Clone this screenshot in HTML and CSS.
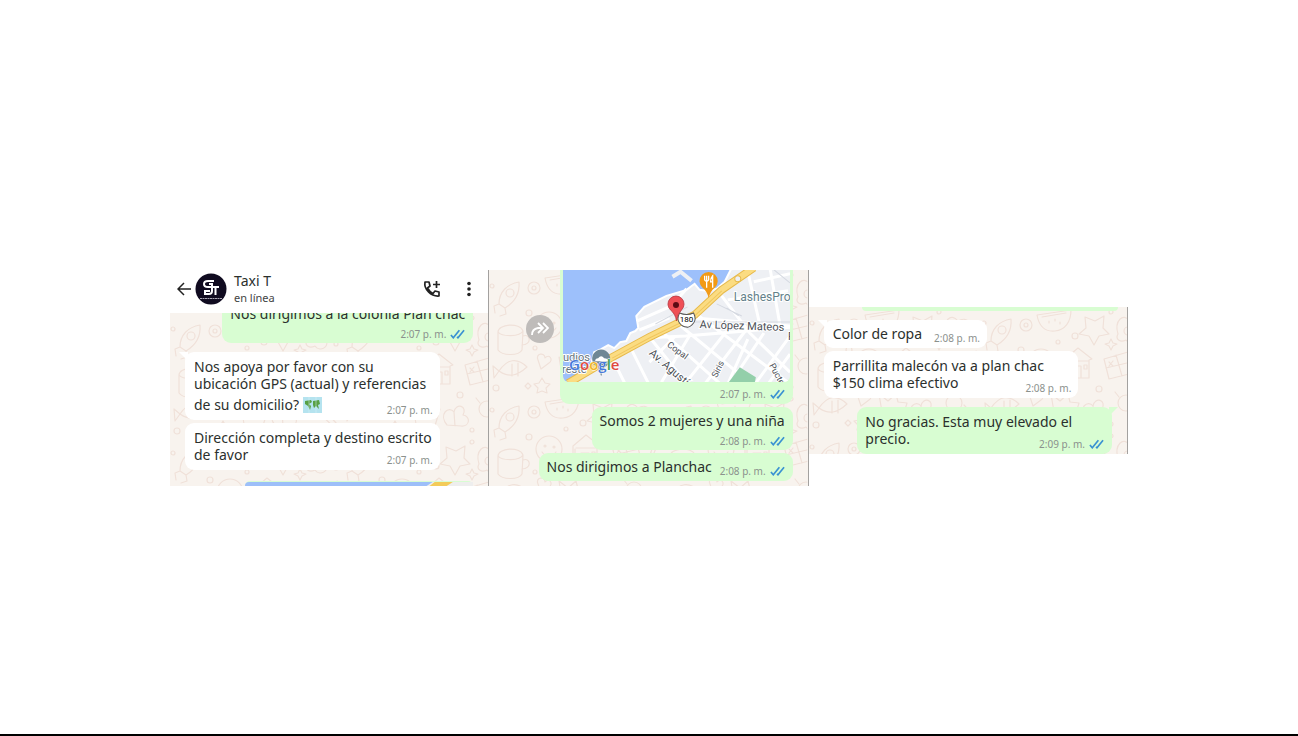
FILE: index.html
```html
<!DOCTYPE html>
<html lang="es">
<head>
    <meta charset="UTF-8">
    <title>Taxi T</title>
    <link rel="stylesheet" href="styles.css">
</head>
<body>
    <!-- shared shapes -->
    <svg class="defs" width="0" height="0" aria-hidden="true">
        <defs>
            <symbol id="ticks" viewBox="0 0 16 10">
                <path d="M1 6l2.5 3L10 1M7.5 8l1 1L15 1" fill="none" stroke="#3a92d2" stroke-width="1.8"/>
            </symbol>
            <pattern id="doodles" width="172" height="124" patternUnits="userSpaceOnUse">
                <g fill="none" stroke="#f0e1d9" stroke-width="1.2" stroke-linecap="round" stroke-linejoin="round">
                    <path d="M10 34c0-12 8-20 20-22 1 12-4 20-14 26zM10 34l-5 2 1 7M16 38l1 6-6 2"/>
                    <circle cx="21" cy="23" r="4"/>
                    <circle cx="45" cy="18" r="6"/><circle cx="45" cy="18" r="2"/>
                    <path d="M56 8l34-5c0 12-6 20-16 21S58 19 56 8zM61 10l24-4M68 14v2M74 12v2M79 15v2"/>
                    <path d="M104 10l10 4 9-5-1 12 6 6-10 2-5 9-5-9-10-2 7-6z"/>
                    <path d="M137 27c-4-13 5-22 12-13 10-6 17 5 7 13 4 8-7 12-11 6-6 3-11-1-8-6z"/>
                    <circle cx="147" cy="24" r="4"/>
                    <path d="M9 62c0-8 22-10 25-1l-1 19c-3 6-20 6-24 0zM9 62c4 5 22 5 25-1M34 66c8-3 9 9-1 9"/>
                    <circle cx="60" cy="55" r="13"/><circle cx="56" cy="52" r="1"/><circle cx="65" cy="53" r="1"/>
                    <path d="M53 58c4 6 10 6 14 0"/>
                    <path d="M84 65V52l13-11 14 11-3 1v18H86V55M92 71V59h8v12M87 54h21M103 58h3v4h-3z"/>
                    <path d="M123 52l24-7 5 21-24 6zM135 48l6 21M125 61l25-6M128 55l4 4M132 54l-4 5"/>
                    <path d="M158 69l9-25 3 3-10 24zM162 59l5 2"/>
                    <path d="M10 101c8-12 18-14 28-4-10 9-18 11-28 4zM10 101l-6-5 1 12zM23 94v12M29 93v13"/>
                    <path d="M49 90c-3-7 7-8 7-2 4-5 9 2 4 5l-8 6zM53 108l3 5 5 1-4 4 1 5-5-2-5 2 1-5-4-4 5-1z"/>
                    <path d="M74 111l-4-24 9 7 8-7 2 8 9 1-6 20zM77 102h13M76 106h15"/>
                    <path d="M105 112c-9-11 2-20 7-13 2-10 14-6 9 3 8 1 7 12-2 11zM112 99l1 14"/>
                    <circle cx="145" cy="96" r="8"/><path d="M151 102l13 12 3-3-12-13M160 111l-3 4M138 90l-4-5"/>
                    <circle cx="3" cy="16" r="2"/><circle cx="40" cy="43" r="3"/><circle cx="94" cy="29" r="3"/>
                    <circle cx="130" cy="5" r="2"/><circle cx="166" cy="31" r="2"/><circle cx="77" cy="35" r="2"/>
                    <circle cx="118" cy="82" r="3"/><circle cx="46" cy="78" r="2"/><circle cx="7" cy="118" r="3"/>
                    <circle cx="130" cy="117" r="2"/><circle cx="78" cy="77" r="2"/><circle cx="165" cy="83" r="3"/>
                    <path d="M36 116l3-3 3 3-3 3zM128 36l2-4 2 4 4 1-4 2-2 4-2-4-4-2z"/>
                </g>
            </pattern>
        </defs>
    </svg>

    <main class="wrap">
        <section class="panel">
            <header class="top">
                <button class="icon" aria-label="Atrás">
                    <svg width="14" height="14" viewBox="0 0 14 14"><path d="M14 7H1M7 1L1 7l6 6" fill="none" stroke="#222" stroke-width="1.5"/></svg>
                </button>
                <svg class="avatar" width="32" height="32" viewBox="0 0 32 32" role="img" aria-label="GT">
                    <circle cx="16" cy="16" r="15.5" fill="#100b20"/>
                    <!-- interlocked monogram -->
                    <path d="M19 8h-6q-4 0-4 3t4 3h4v-3h-3M16 14h8M20.500 14v8M17 14v4q0 3-3 3h-4v-3h5" fill="none" stroke="#fff" stroke-width="2"/>
                    <path d="M5 25.500h22" stroke="#aaa7b4" stroke-width="1" stroke-dasharray="2 .5"/>
                </svg>
                <div class="who">
                    <h1>Taxi T</h1>
                    <p>en línea</p>
                </div>
                <button class="icon call" aria-label="Llamar">
                    <svg width="18" height="18" viewBox="0 0 18 18"><path d="M2 2h4l1 4-2.500 2q2 4 5.500 5.500l2-2.500 4 1v4Q10 16.500 5.500 12T2 2zM13.500 1v7M10 4.500h7" fill="none" stroke="#222" stroke-width="1.700" stroke-linejoin="round"/></svg>
                </button>
                <button class="icon" aria-label="Más opciones">
                    <svg width="4" height="16" viewBox="0 0 4 16" fill="#222"><circle cx="2" cy="2.500" r="1.800"/><circle cx="2" cy="8" r="1.800"/><circle cx="2" cy="13.500" r="1.800"/></svg>
                </button>
            </header>
            <div class="chat">
                <svg class="paper" aria-hidden="true"><rect width="100%" height="100%" fill="url(#doodles)"/></svg>
                <div class="msg out cut">
                    <p>Nos dirigimos a la colonia Plan chac</p>
                    <div class="meta below">2:07 p. m.<svg class="ticks"><use href="#ticks"/></svg></div>
                </div>
                <div class="msg in tail wide">
                    <p>Nos apoya por favor con su<br>ubicación GPS (actual) y referencias<br>de su domicilio?
                        <svg class="emoji" width="19" height="16" viewBox="0 0 19 16" role="img" aria-label="Mapa"><path fill="#b5e3ef" d="M0 0h19v16H0z"/><path fill="#58a044" d="M2 4l6-1 1 2-3 2 2 2-1 4-2-4-3-2zM10 4l6-1 1 4-2 1 1 4-3-3-2 2-1-3z"/><path d="M6 0v16M13 0v16" stroke="#d9f1f5" stroke-width=".5"/></svg>
                    </p>
                    <div class="meta">2:07 p. m.</div>
                </div>
                <div class="msg in wide">
                    <p>Dirección completa y destino escrito<br>de favor</p>
                    <div class="meta">2:07 p. m.</div>
                </div>
                <div class="msg out peek">
                    <svg width="100%" height="4" viewBox="0 0 226 4" preserveAspectRatio="none" aria-hidden="true"><path fill="#9dbff9" d="M0 4Q0 0 4 0h222v4z"/><path fill="#eee" d="M180 4l6-4h40v4z"/><path fill="#f3cb59" d="M183 4l5-4h18l-6 4z"/></svg>
                </div>
            </div>
        </section>

        <section class="panel">
            <div class="chat">
                <svg class="paper" aria-hidden="true"><rect width="100%" height="100%" fill="url(#doodles)"/></svg>
                <button class="forward" aria-label="Reenviar">
                    <svg width="18" height="14" viewBox="0 0 18 14"><path d="M1 13Q1 7 7 6h5M7 1l5 5-5 5M12 1l5 5-5 5" fill="none" stroke="#fff" stroke-width="1.800"/></svg>
                </button>
                <div class="msg out place">
                    <svg class="map" viewBox="0 0 226 112" preserveAspectRatio="xMidYMid slice" role="img" aria-label="Mapa">
                        <path fill="#eef0f4" d="M0 0h226v112H0z"/>
                        <path fill="#9dc0fb" stroke="#fff" stroke-width="2" d="M-2-2h170l-7 14-8 7-10 2-7-1-5-6-8 6-20 6-22 11-8 9 2 12-3 3-5 2-4 8-6 1-6 6-6-3-7 4-7 3-3 12L9 114H-2z"/>
                        <path d="M109 7l8-5 11 9" fill="none" stroke="#eef0f4" stroke-width="4"/>
                        <!-- side streets -->
                        <g fill="none" stroke="#fff" stroke-width="3">
                            <path d="M49 88l13 26M68 79l17 34M86 67l37 46M99 62l58 52M116 55l72 59M134 45l94 70M80 68l42-2 106-9M131 48l95 8M158 26l28 37 40 39"/>
                            <path d="M86 92l25-25M98 112l29-48M121 114l42-53M141 114l42-55M164 114l20-45M200 63l-34 51M226 66l-35 48M226 84l-22 30M184 2l12 53M206-2l10 57M164 30l60-9M74 51l34-15 15-17M76 60l30-12M190 12l36-8"/>
                        </g>
                        <path d="M92 54l32-17M153 34l25 12M163 38l12 8M210 0l16 13M128 52h98" fill="none" stroke="#d5d9e1" stroke-width="1"/>
                        <path fill="#93cfaa" d="M165 112l11-15 16 10-1 5z"/>
                        <path d="M5 113l44-26 37-20 45-22 27-25L190-2" fill="none" stroke="#e7ba4c" stroke-width="8"/>
                        <path d="M5 113l44-26 37-20 45-22 27-25L190-2" fill="none" stroke="#fbdc82" stroke-width="6"/>
                        <path d="M49 88l37-20 45-22 27-25" fill="none" stroke="#f0c65e" stroke-width="1"/>
                        <circle cx="174" cy="9" r="3" fill="#eef0f4" stroke="#e7ba4c"/>
                        <g class="streets">
                            <text x="170" y="31" class="shop">LashesPro</text>
                            <text x="136" y="58" transform="rotate(2 136 58)">Av López Mateos</text>
                            <text x="85" y="84" transform="rotate(41 85 84)">Av. Agustín</text>
                            <text x="103" y="76" class="small" transform="rotate(36 103 76)">Copal</text>
                            <text x="153" y="108" class="small" transform="rotate(-64 153 108)">Siris</text>
                            <text x="205" y="95" class="small" transform="rotate(62 205 95)">Puctería</text>
                            <text x="224" y="70">P</text>
                        </g>
                        <path d="M116 43q7 3 14 0 3 6 0 10-4 5-7 4-4 0-7-4-3-4 0-10z" fill="#fff" stroke="#555"/>
                        <text x="123" y="52" class="shield">180</text>
                        <path fill="#f29a16" d="M145 28q-2-7-6-10a9 9 0 1 1 12 0q-4 3-6 10z"/>
                        <path d="M141 6v4q2 3 4 0V6M143 6v12M149 18V6q-2 2-2 6h2" fill="none" stroke="#fff" stroke-width="1.300"/>
                        <path fill="#ef4f56" stroke="#b63641" stroke-width=".8" d="M113 51q-1-7-6-11a8 8 0 1 1 11 0q-4 4-5 11z"/>
                        <circle cx="112.500" cy="35" r="3" fill="#5c0b14"/>
                        <path fill="#6f8795" d="M38 106l-3-9a9 9 0 1 1 6 0z"/>
                        <path fill="#fff" d="M32 91q0-3 3-3 3-4 6 0 4 0 4 3z"/>
                        <g class="streets"><text x="0" y="91" class="poi">udios</text><text x="-1" y="103" class="poi">reste</text></g>
                        <text x="6" y="100" class="google"><tspan fill="#4779d9">G</tspan><tspan fill="#df493e">o</tspan><tspan fill="#efb427">o</tspan><tspan fill="#4779d9">g</tspan><tspan fill="#3f9f56">l</tspan><tspan fill="#df493e">e</tspan></text>
                    </svg>
                    <div class="meta below">2:07 p. m.<svg class="ticks"><use href="#ticks"/></svg></div>
                </div>
                <div class="msg out">
                    <p>Somos 2 mujeres y una niña</p>
                    <div class="meta below">2:08 p. m.<svg class="ticks"><use href="#ticks"/></svg></div>
                </div>
                <div class="msg out line">
                    <p>Nos dirigimos a Planchac</p>
                    <div class="meta">2:08 p. m.<svg class="ticks"><use href="#ticks"/></svg></div>
                </div>
            </div>
        </section>

        <section class="panel last">
            <div class="chat">
                <svg class="paper" aria-hidden="true"><rect width="100%" height="100%" fill="url(#doodles)"/></svg>
                <div class="msg out sliver"></div>
                <div class="msg in tail line">
                    <p>Color de ropa</p>
                    <div class="meta">2:08 p. m.</div>
                </div>
                <div class="msg in wide">
                    <p>Parrillita malecón va a plan chac<br>$150 clima efectivo</p>
                    <div class="meta">2:08 p. m.</div>
                </div>
                <div class="msg out tail wide">
                    <p>No gracias. Esta muy elevado el<br>precio.</p>
                    <div class="meta">2:09 p. m.<svg class="ticks"><use href="#ticks"/></svg></div>
                </div>
            </div>
        </section>
    </main>
</body>
</html>
```
FILE: styles.css
```css
*{box-sizing: border-box;}
body,h1,p{margin: 0;}
body{
    display: flex;
    flex-direction: column;
    justify-content: center;
    min-height: 100vh;
    padding-top: 22px;
    border-bottom: 2px solid #000;
    background: #fff;
    font-family: "Noto Sans","Open Sans",sans-serif;
    font-size: 14px;
    line-height: 17px;
    color: #2b302d;
}
button{
    display: flex;
    align-items: center;
    justify-content: center;
    padding: 0;
    border: none;
    background: none;
    cursor: pointer;
}
.defs{position: absolute;}
.wrap{
    display: flex;
    width: 100%;
    max-width: 958px;
    margin: 0 auto;
}
.panel{
    display: flex;
    flex-direction: column;
    flex: 1;
    min-width: 0;
    border-right: 1px solid #a3a19f;
}
.panel.last{
    align-self: flex-start;
    margin-top: 37px;
}

/* header */
.top{
    display: flex;
    align-items: center;
    height: 43px;
    padding: 0 17px 6px 7px;
}
.avatar{margin: 0 7px 0 4px;}
.who{flex: 1;}
.who h1{
    font-size: 14px;
    font-weight: 400;
}
.who p{
    font-size: 11px;
    color: #444;
}
.call{margin-right: 26px;}

/* messages */
.chat{
    position: relative;
    display: flex;
    flex-direction: column;
    flex: 1;
    gap: 3px;
    overflow: hidden;
    background: #f8f3ee;
}
.paper{
    position: absolute;
    width: 100%;
    height: 100%;
}
.msg{
    position: relative;
    padding: 5px 7px 2px 9px;
    border-radius: 9px;
}
.in{
    align-self: flex-start;
    margin-left: 15px;
    background: #fff;
}
.out{
    align-self: flex-end;
    margin-right: 15px;
    padding: 5px 8px 2px;
    background: #d8fdd2;
}
.wide{
    width: 80%;
    padding-top: 6px;
    padding-bottom: 3px;
}
.meta{
    display: flex;
    justify-content: flex-end;
    align-items: center;
    gap: 4px;
    margin-top: -10px;
    font-size: 10px;
    line-height: 14px;
    color: #8b918d;
    white-space: nowrap;
}
.meta.below{margin-top: 5px;}
.ticks{
    width: 15px;
    height: 10px;
}
.line{
    display: flex;
    align-items: flex-end;
    gap: 8px;
    padding-bottom: 6px;
}
.line .meta{margin: 0 0 -3px;}
.in.line{gap: 12px;}
.emoji{
    margin-top: 5px;
    vertical-align: -3px;
}
.tail::before{
    content: "";
    position: absolute;
    top: 0;
    left: -6px;
    border-top: 9px solid #fff;
    border-left: 9px solid transparent;
}
.out.tail::before{
    left: auto;
    right: -6px;
    border-top-color: #d8fdd2;
    border-left: none;
    border-right: 9px solid transparent;
}
.cut{
    margin-top: -13px;
    margin-bottom: 6px;
}
.peek{
    width: 228px;
    height: 5px;
    margin-top: 8px;
    padding: 1px 0 0;
    border-radius: 6px 6px 0 0;
}
.peek svg{display: block;}
.place{
    width: 233px;
    padding: 0 3px 3px;
    border-radius: 0 0 9px 9px;
}
.place .meta{padding-right: 5px;}
.map{
    display: block;
    width: 100%;
    height: 112px;
    border-radius: 0 0 6px 6px;
}
.streets{
    fill: #4c5158;
    stroke: #fff;
    stroke-width: 2px;
    paint-order: stroke;
    font-family: Roboto,sans-serif;
    font-size: 11px;
}
.streets .shop{
    fill: #64818a;
    font-size: 12px;
}
.streets .small{font-size: 9px;}
.streets .poi{fill: #65737d;}
.shield{
    font: 8px Roboto,sans-serif;
    text-anchor: middle;
}
.google{
    font: 600 15px "Open Sans",sans-serif;
    stroke: #fff;
    stroke-width: 1px;
    paint-order: stroke;
}
.forward{
    position: absolute;
    top: 45px;
    left: 37px;
    width: 28px;
    height: 28px;
    border-radius: 50%;
    background: #bfbcba;
}
.sliver{
    width: 256px;
    height: 4px;
    margin: 0 9px 6px 0;
    border-radius: 0 0 9px 9px;
    padding: 0;
}
.last .out.wide{margin-top: 6px;}
```
